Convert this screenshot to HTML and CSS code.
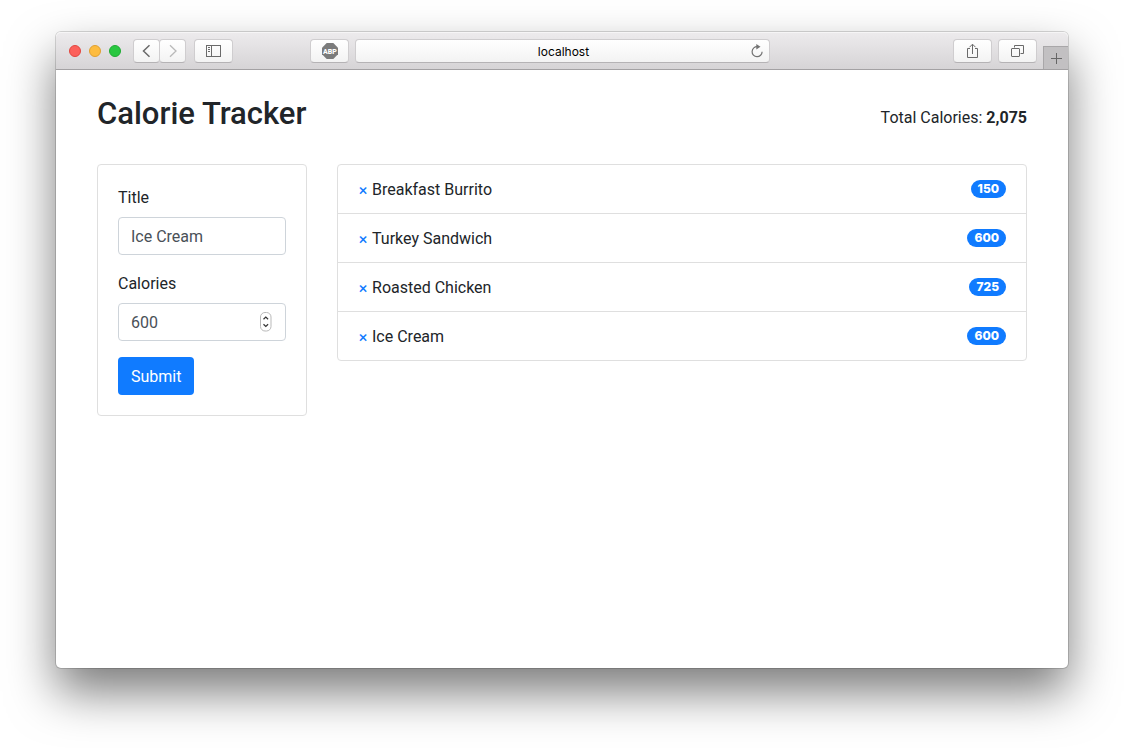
FILE: index.html
```
<!DOCTYPE html>
<html lang="en">
<head>
<meta charset="utf-8">
<meta name="viewport" content="width=device-width, initial-scale=1">
<title>Calorie Tracker</title>
<link rel="stylesheet" href="styles.css">
</head>
<body class="desktop">
<div class="window">
  <header class="toolbar">
    <div class="tools-left">
      <div class="lights">
        <button type="button" class="light light-close" aria-label="Close"></button>
        <button type="button" class="light light-min" aria-label="Minimize"></button>
        <button type="button" class="light light-zoom" aria-label="Zoom"></button>
      </div>
      <div class="nav">
        <button type="button" class="tool tool-nav" aria-label="Back">
          <svg width="10" height="14" viewBox="0 0 10 14" fill="none" stroke="#6a6a6a" stroke-width="1.5"><path d="M7.500 1.200 1.500 7l6 5.800"/></svg>
        </button>
        <button type="button" class="tool tool-nav" aria-label="Forward">
          <svg width="10" height="14" viewBox="0 0 10 14" fill="none" stroke="#b9b9b9" stroke-width="1.3"><path d="M2 1.2 8 7l-6 5.8"/></svg>
        </button>
      </div>
      <button type="button" class="tool" aria-label="Sidebar">
        <svg width="15" height="12" viewBox="0 0 15 12" fill="none" stroke="#6a6a6a"><rect x=".5" y=".5" width="14" height="11"/><path d="M5.500.5v11M2 2.500h2M2 4.500h2M2 6.500h2"/></svg>
      </button>
    </div>
    <div class="address">
      <button type="button" class="tool" aria-label="Adblock Plus">
        <svg width="16" height="16" viewBox="0 0 16 16"><path fill="#7b7b7b" d="M4.700 0h6.600L16 4.700v6.600L11.300 16H4.700L0 11.300V4.700z"/><text class="abp" x="8" y="10.500" text-anchor="middle">ABP</text></svg>
      </button>
      <div class="url">
        <input class="url-input" type="text" aria-label="Address" value="localhost">
        <button type="button" class="reload" aria-label="Reload">
          <svg width="12" height="14" viewBox="0 0 12 14"><path fill="none" stroke="#727272" stroke-width="1.200" d="M6.500 2.700A5 5 0 1 0 11.100 7.700"/><path fill="#727272" d="M5.300 0 9.500 2.800 5.300 5.500z"/></svg>
        </button>
      </div>
    </div>
    <div class="tools-right">
      <button type="button" class="tool" aria-label="Share">
        <svg width="13" height="16" viewBox="0 0 13 16" fill="none" stroke="#6a6a6a"><path d="M4 5.500H1.500v9h10v-9H9M6.500 11V1.500M3.500 4.200l3-3 3 3"/></svg>
      </button>
      <button type="button" class="tool" aria-label="Show all tabs">
        <svg width="13" height="14" viewBox="0 0 13 14" fill="none" stroke="#6a6a6a"><rect x=".5" y="4.500" width="8" height="8" rx=".5"/><path d="M3.500 3.500v-2h9v8h-3"/></svg>
      </button>
      <button type="button" class="new-tab" aria-label="New tab">
        <svg width="11" height="11" viewBox="0 0 11 11" stroke="#666"><path d="M5.500 0v11M0 5.500h11"/></svg>
      </button>
    </div>
  </header>

  <main class="page">
    <div class="heading">
      <h1 class="title">Calorie Tracker</h1>
      <p class="total">Total Calories: <strong>2,075</strong></p>
    </div>
    <div class="columns">
      <form class="card">
        <div class="field">
          <label class="label" for="title">Title</label>
          <input class="input" id="title" type="text" value="Ice Cream">
        </div>
        <div class="field">
          <label class="label" for="calories">Calories</label>
          <div class="number">
            <input class="input" id="calories" type="number" value="600">
            <svg class="stepper" width="12" height="20" viewBox="0 0 12 20" fill="none" aria-hidden="true"><rect x=".5" y=".5" width="10.500" height="18.500" rx="4.500" fill="#fff" stroke="#b9b9b9"/><path stroke="#333" stroke-width="1.200" d="M3.500 7.200l2.300-2.200 2.300 2.200M3.500 12.300l2.300 2.200 2.300-2.200"/></svg>
          </div>
        </div>
        <button type="button" class="submit">Submit</button>
      </form>
      <ul class="list">
        <li class="item"><a class="remove" href="#" aria-label="Remove Breakfast Burrito">×</a><span class="name">Breakfast Burrito</span><span class="badge">150</span></li>
        <li class="item"><a class="remove" href="#" aria-label="Remove Turkey Sandwich">×</a><span class="name">Turkey Sandwich</span><span class="badge">600</span></li>
        <li class="item"><a class="remove" href="#" aria-label="Remove Roasted Chicken">×</a><span class="name">Roasted Chicken</span><span class="badge">725</span></li>
        <li class="item"><a class="remove" href="#" aria-label="Remove Ice Cream">×</a><span class="name">Ice Cream</span><span class="badge">600</span></li>
      </ul>
    </div>
  </main>
</div>
</body>
</html>
```
FILE: styles.css
```
*, *::before, *::after { box-sizing: border-box; }

.desktop {
  margin: 0;
  min-height: 100vh;
  padding: 32px 56px 80px;
  display: flex;
  flex-direction: column;
  background: #fff;
  color: #212529;
  font-family: Roboto, "Liberation Sans", sans-serif;
  font-size: 16px;
  line-height: 26px;
}

button, input { font: inherit; color: inherit; }
button { margin: 0; padding: 0; border: 0; }
svg { display: block; }

.window {
  flex: 1;
  display: flex;
  flex-direction: column;
  border-radius: 5px;
  background: #fff;
  box-shadow: 0 0 0 1px rgba(0, 0, 0, .15), 0 24px 48px rgba(0, 0, 0, .52);
}

/* Browser toolbar */
.toolbar {
  display: grid;
  grid-template-columns: 127fr 230fr 149fr;
  height: 38px;
  border-bottom: 1px solid #a3a1a3;
  border-radius: 5px 5px 0 0;
  background: linear-gradient(#edebed, #d6d4d6);
  box-shadow: inset 0 1px #f6f5f6;
}
.tools-left, .address, .tools-right { display: flex; align-items: center; }
.tools-left { gap: 8px; padding-left: 13px; }
.lights { display: flex; gap: 8px; margin-right: 4px; }
.light { width: 12px; height: 12px; border-radius: 50%; }
.light-close { background: #fc605b; border: 1px solid #e2463f; }
.light-min { background: #fdbc40; border: 1px solid #e0a030; }
.light-zoom { background: #29c740; border: 1px solid #1fab33; }
.nav { display: flex; }
.tool {
  display: flex;
  align-items: center;
  justify-content: center;
  width: 39px;
  height: 24px;
  border: 1px solid #cfcdcf;
  border-bottom-color: #b5b3b5;
  border-radius: 4px;
  background: linear-gradient(#fff, #f3f3f3);
}
.tool-nav { width: 27px; }
.tool-nav + .tool-nav { margin-left: -1px; }
.address { gap: 6px; }
.abp { fill: #fff; font-size: 7px; font-weight: 800; }
.url {
  flex: 1;
  display: flex;
  align-items: center;
  height: 24px;
  padding: 0 6px;
  border: 1px solid #cfcdcf;
  border-bottom-color: #b5b3b5;
  border-radius: 4px;
  background: linear-gradient(#fff, #f3f3f3);
}
.url-input {
  flex: 1;
  min-width: 0;
  padding: 2px 0 0 14px;
  border: 0;
  background: none;
  color: #000;
  font-family: Inter, "Liberation Sans", sans-serif;
  font-size: 12px;
  line-height: 20px;
  text-align: center;
}
.reload { background: none; }
.tools-right { justify-content: flex-end; gap: 6px; }
.new-tab {
  display: flex;
  align-items: center;
  justify-content: center;
  align-self: flex-end;
  width: 25px;
  height: 23px;
  border: 1px solid #a9a7a9;
  border-width: 1px 0 0 1px;
  background: #c2c0c2;
}

/* Page */
.page { padding: 24px 41px; }
.heading {
  display: flex;
  align-items: flex-end;
  justify-content: space-between;
  margin-bottom: 30px;
}
.title { margin: 0; font-size: 31px; font-weight: 500; line-height: 40px; }
.total { margin: 0; line-height: 32px; }
.columns {
  display: grid;
  grid-template-columns: repeat(12, minmax(0, 1fr));
  gap: 30px;
  align-items: start;
}
.card {
  grid-column: span 3;
  padding: 20px;
  border: 1px solid #dfdfdf;
  border-radius: 4px;
}
.field { margin-bottom: 16px; }
.label { display: block; margin-bottom: 6px; }
.number { position: relative; }
.input {
  display: block;
  width: 100%;
  height: 38px;
  padding: 6px 12px;
  border: 1px solid #ced4da;
  border-radius: 4px;
  background: #fff;
  color: #495057;
  appearance: textfield;
}
.input::-webkit-inner-spin-button { appearance: none; margin: 0; }
.stepper { position: absolute; top: 9px; right: 14px; }
.submit {
  display: block;
  height: 38px;
  padding: 2px 13px 0;
  border-radius: 4px;
  background: #107bff;
  color: #fff;
}
.list {
  grid-column: span 9;
  margin: 0;
  padding: 0;
  border: 1px solid #dfdfdf;
  border-radius: 4px;
  list-style: none;
}
.item { display: flex; align-items: center; padding: 12px 20px 10px; }
.item + .item { border-top: 1px solid #dfdfdf; }
.remove {
  margin-right: 4px;
  color: #107bff;
  font-family: Inter, "Liberation Sans", sans-serif;
  font-weight: 500;
  font-size: 15px;
  text-decoration: none;
}
.name { flex: 1; }
.badge {
  margin-bottom: 2px;
  padding: 0 7px;
  border-radius: 9px;
  background: #107bff;
  color: #fff;
  font-family: Inter, "Liberation Sans", sans-serif;
  font-size: 12px;
  font-weight: 800;
  line-height: 18px;
}
```
